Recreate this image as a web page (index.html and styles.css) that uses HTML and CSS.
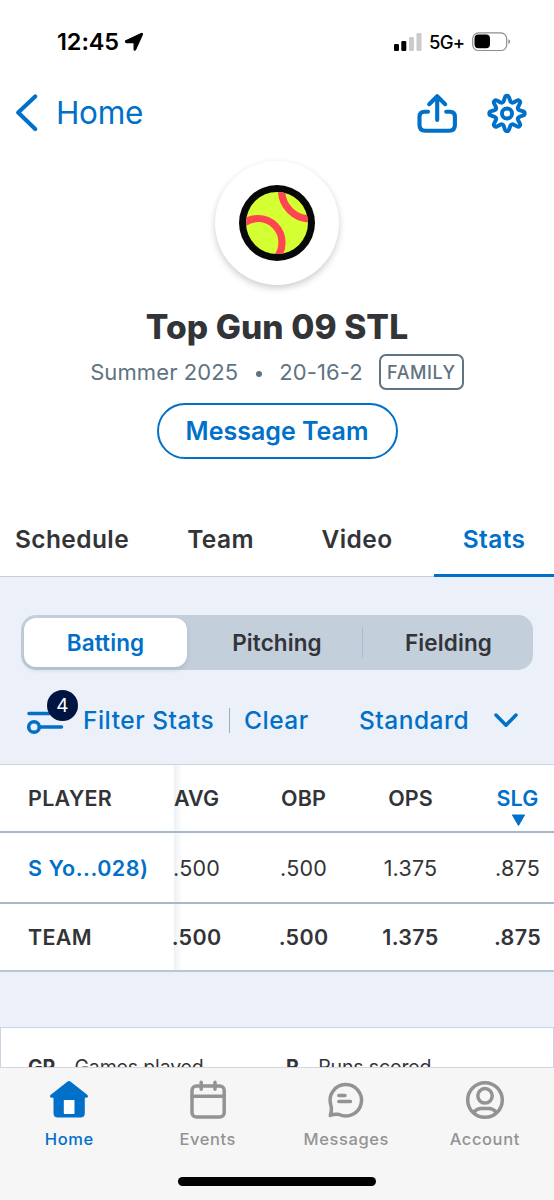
FILE: index.html
```
<!DOCTYPE html>
<html lang="en">
<head>
<meta charset="utf-8">
<title>Top Gun 09 STL</title>
<link rel="stylesheet" href="styles.css">
</head>
<body>
<div class="screen">
  <div class="status">
    <span class="time">12:45</span>
    <svg class="locate" width="20" height="20" viewBox="0 0 20 20"><path stroke="#000" stroke-width="1.200" stroke-linejoin="round" d="M1.800 8.700 17.300 1.500Q18.900 1 18.300 2.700L11.500 17.700Q10.500 19 10.100 17.300V10.700H2.600Q.9 10 1.800 8.700Z"/></svg>
    <svg class="signal" width="28" height="18" viewBox="0 0 28 18"><rect x="0" y="11" width="5" height="7" rx="1.3"/><rect x="7.3" y="8" width="5" height="10" rx="1.3"/><g fill="#cbcbcb"><rect x="15" y="4" width="5" height="14" rx="1.3"/><rect x="22.5" y="0" width="5" height="18" rx="1.3"/></g></svg>
    <span class="network">5G+</span>
    <svg class="battery" width="39" height="20" viewBox="0 0 39 20"><rect x=".7" y=".9" width="34" height="17.6" rx="5.8" fill="none" stroke="#8e8e8e" stroke-width="1.2"/><rect x="2.5" y="2.6" width="15.5" height="13.6" rx="4"/><path d="M36.4 7.2Q38.2 8 38.2 9.5T36.4 12Z" fill="#8e8e8e"/></svg>
  </div>
  <header class="nav">
    <svg class="back" width="24" height="38" viewBox="0 0 24 38"><path d="M20.200 2.500 3.200 18.500l17 16.500"/></svg>
    <a class="nav-home">Home</a>
    <svg class="share" width="40" height="40" viewBox="0 0 40 40"><path d="M20.2 27V3.500M12.200 11.200l8-8 8 8M11 18.700H7.500q-5 0-5 5V32q0 5.700 5.700 5.700h24q5.700 0 5.700-5.700v-8.300q0-5-5-5h-3.700"/></svg>
    <svg class="gear" width="40" height="40" viewBox="-21 -21.500 42 42"><path d="M-2.1-17.070A2.200 2.200 0 0 1 2.100-17.070L3.470-12.940A2.300 2.300 0 0 0 6.700-11.600L10.590-13.550A2.200 2.200 0 0 1 13.550-10.590L11.600-6.700A2.300 2.300 0 0 0 12.940-3.470L17.070-2.100A2.200 2.200 0 0 1 17.070 2.100L12.940 3.470A2.300 2.300 0 0 0 11.600 6.700L13.550 10.590A2.200 2.200 0 0 1 10.590 13.550L6.700 11.600A2.300 2.300 0 0 0 3.470 12.940L2.100 17.070A2.200 2.200 0 0 1-2.100 17.070L-3.470 12.940A2.300 2.300 0 0 0-6.700 11.600L-10.590 13.550A2.200 2.200 0 0 1-13.550 10.590L-11.600 6.700A2.300 2.300 0 0 0-12.940 3.470L-17.070 2.100A2.200 2.200 0 0 1-17.070-2.100L-12.940-3.470A2.300 2.300 0 0 0-11.600-6.700L-13.550-10.590A2.200 2.200 0 0 1-10.590-13.550L-6.700-11.600A2.300 2.300 0 0 0-3.470-12.940Z"/><circle r="5.300"/></svg>
  </header>
  <section class="profile">
    <div class="avatar">
      <svg width="76" height="76" viewBox="0 0 76 76"><defs><clipPath id="ball"><circle cx="38" cy="38" r="31"/></clipPath></defs><circle cx="38" cy="38" r="38" fill="#080808"/><circle cx="38" cy="38" r="31" fill="#d4ff32"/><g clip-path="url(#ball)" fill="none" stroke="#ff4452" stroke-width="7.200"><circle cx="19" cy="57.500" r="24"/><circle cx="71.500" cy="5" r="29"/></g></svg>
    </div>
    <h1 class="title">Top Gun 09 STL</h1>
    <div class="meta"><span class="season">Summer 2025</span><i class="dot"></i><span class="record">20-16-2</span><span class="badge">FAMILY</span></div>
    <button class="message"><span>Message Team</span></button>
  </section>
  <nav class="tabs">
    <a class="tab schedule">Schedule</a><a class="tab team">Team</a><a class="tab video">Video</a><a class="tab stats">Stats</a>
  </nav>
  <main class="content">
    <div class="segments"><span class="segment active">Batting</span><span class="segment pitching">Pitching</span><i class="segment-rule"></i><span class="segment fielding">Fielding</span></div>
    <div class="filters">
      <div class="filter-icon">
        <svg width="38" height="26" viewBox="0 0 38 26"><path d="M2 4.500h29M13 18h21.500"/><circle cx="7" cy="18" r="5.300"/></svg>
        <span class="count">4</span>
      </div>
      <span class="filter-label">Filter Stats</span><i class="rule"></i><span class="clear">Clear</span><span class="standard">Standard</span>
      <svg class="chevron" width="26" height="16" viewBox="0 0 26 16"><path d="M3 3l10 10.200L23 3"/></svg>
    </div>
    <div class="table">
      <div class="row head"><span class="player">PLAYER</span><span class="cell first">AVG</span><span class="cell">OBP</span><span class="cell">OPS</span><span class="cell sorted">SLG<svg class="arrow" width="15" height="13" viewBox="0 0 15 13"><path d="M1.400 1h12.200L7.500 11.500Z" stroke="#0070c9" stroke-linejoin="round"/></svg></span></div>
      <div class="row"><span class="player link">S Yo...028)</span><span class="cell first">.500</span><span class="cell">.500</span><span class="cell">1.375</span><span class="cell">.875</span></div>
      <div class="row total"><span class="player">TEAM</span><span class="cell first">.500</span><span class="cell">.500</span><span class="cell">1.375</span><span class="cell">.875</span></div>
    </div>
    <div class="legend"><span><b>GP</b> - Games played</span><span><b>R</b> - Runs scored</span></div>
  </main>
  <footer class="tabbar">
    <div class="items">
      <a class="item current"><svg width="40" height="40" viewBox="0 0 40 40"><path fill="currentColor" stroke="none" d="M18.300 1.700q1.700-1.400 3.400 0L38.500 15q1.500 2.700-1.500 2.700h-1.200V33q0 4.500-4.500 4.500H9q-4.500 0-4.500-4.500V17.700H3q-3-.2-1.500-2.700Z"/><rect x="14.800" y="20" width="10.700" height="14" rx=".8" fill="#fff" stroke="none"/></svg><span>Home</span></a>
      <a class="item"><svg width="40" height="40" viewBox="0 0 40 40"><rect x="4" y="6" width="32.200" height="31" rx="4.500"/><path d="M4 16.200h32M13.200 2.300v7M27 2.300v7"/></svg><span>Events</span></a>
      <a class="item"><svg width="40" height="40" viewBox="0 0 40 40"><path stroke-linejoin="round" d="M4.300 35.500Q6.300 29 4.700 24.500A15.700 15.700 0 1 1 13.200 34.500Q8.500 33.800 4.300 35.500Z"/><path d="M12.800 15.500h6.200M12.800 21.500h11.700"/></svg><span>Messages</span></a>
      <a class="item"><svg width="40" height="40" viewBox="0 0 40 40"><circle cx="20" cy="20" r="17.300"/><circle cx="20" cy="15.800" r="7.200"/><path d="M8.500 32.500q3.500-4 7.500-4h8q4 0 7.500 4"/></svg><span>Account</span></a>
    </div>
    <i class="indicator"></i>
  </footer>
</div>
</body>
</html>
```
FILE: styles.css
```
* { box-sizing: border-box; }
body { margin: 0; background: #fff; font-family: Inter, sans-serif; color: #333438; }
.screen { width: 554px; height: 1200px; display: flex; flex-direction: column; overflow: hidden; }
svg { display: block; flex: none; }
span, a { white-space: nowrap; }
.status { height: 83px; flex: none; display: flex; align-items: center; padding-left: 57px; color: #000; }
.time { font-size: 23.5px; font-weight: 600; width: 67px; letter-spacing: -.1px; }
.signal { margin-left: 250px; }
.network { font-size: 18.5px; font-weight: 500; margin-left: 7px; width: 43px; letter-spacing: -.8px; }
.nav { height: 60px; flex: none; display: flex; align-items: center; padding-left: 15px; }
.nav svg { fill: none; stroke: #0070c9; stroke-width: 4.1; stroke-linecap: round; stroke-linejoin: round; }
.nav-home { font-size: 31.5px; color: #0070c9; margin-left: 17px; padding-bottom: 2px; width: 361px; letter-spacing: -.3px; }
.gear { margin-left: 30px; }
.profile { height: 358px; flex: none; display: flex; flex-direction: column; align-items: center; padding-top: 18px; }
.avatar { width: 124px; height: 124px; border-radius: 50%; background: #fff; display: grid; place-items: center; box-shadow: 0 3px 7px rgba(0,0,0,.2); }
.title { margin: 22px 0 0; height: 40px; line-height: 40px; font-size: 33.5px; font-weight: 800; letter-spacing: .1px; }
.meta { display: flex; align-items: center; height: 36px; margin-top: 7px; color: #5f7381; font-size: 22px; letter-spacing: .1px; }
.dot { width: 6px; height: 6px; border-radius: 50%; background: #5f7381; margin: 4px 17px 0 18px; }
.badge { width: 85px; height: 36px; border: 2px solid #5f7381; border-radius: 7px; display: grid; place-items: center; margin-left: 16px; font-size: 18px; font-weight: 500; letter-spacing: .6px; }
.message { width: 241px; height: 56px; margin-top: 13px; padding: 0; border: 2px solid #0070c9; border-radius: 28px; background: #fff; color: #0070c9; font: 600 25px Inter, sans-serif; letter-spacing: 0; }
.tabs { height: 76px; flex: none; display: flex; border-bottom: 1px solid #c9ceda; }
.tab { height: 76px; line-height: 76px; text-align: center; font-size: 24.5px; font-weight: 600; letter-spacing: .4px; }
.schedule { width: 144px; }
.team { width: 153px; }
.video { width: 120px; }
.stats { width: 120px; margin-left: auto; color: #0070c9; border-bottom: 3px solid #0070c9; }
.content { height: 490px; flex: none; background: #ebf0f9; padding-top: 38px; }
.segments { width: 512px; height: 55px; margin-left: 21px; border-radius: 15px; background: #c3cfdb; display: flex; align-items: center; font-size: 22.5px; font-weight: 600; letter-spacing: .1px; }
.segment { text-align: center; line-height: 49px; }
.active { width: 163px; height: 49px; margin-left: 3px; background: #fff; color: #0070c9; border-radius: 12px; box-shadow: 0 3px 4px rgba(70,90,115,.16); }
.pitching { width: 175px; padding-left: 5px; }
.segment-rule { width: 1px; height: 31px; background: #afbdca; }
.fielding { width: 170px; padding-left: 1px; }
.filters { height: 94px; display: flex; align-items: center; padding: 6px 0 0 27px; color: #0070c9; font-size: 24.5px; font-weight: 500; letter-spacing: .5px; }
.filter-icon { width: 56px; position: relative; padding-top: 4px; }
.filter-icon svg, .chevron { fill: none; stroke: #0070c9; stroke-width: 3.5; stroke-linecap: round; stroke-linejoin: round; }
.count { position: absolute; left: 20px; top: -15px; width: 31px; height: 31px; border-radius: 50%; background: #001441; color: #fff; font-size: 19px; font-weight: 400; line-height: 31px; text-align: center; letter-spacing: 0; }
.filter-label { width: 146px; }
.rule { width: 1px; height: 25px; background: #9cacbd; }
.clear { margin-left: 14px; width: 115px; }
.standard { width: 134px; }
.table { background: #fff; border-top: 1px solid #cbd4e2; font-size: 21.5px; }
.row { height: 71px; display: grid; grid-template-columns: 174px 76px 107px 107px 107px; border-bottom: 2px solid #a9b8c8; letter-spacing: .2px; line-height: 26px; }
.head { height: 68px; font-weight: 600; letter-spacing: .1px; }
.total { height: 68px; font-weight: 600; letter-spacing: .3px; border-color: #b8c7d8; }
.player { padding-left: 28px; display: flex; align-items: center; font-weight: 600; letter-spacing: .3px; position: relative; z-index: 1; }
.link { color: #0070c9; letter-spacing: .5px; }
.cell { display: flex; justify-content: center; align-items: center; min-width: 0; }
.first { padding-right: 31px; background: linear-gradient(90deg, #edf1f6, #fff 9px); }
.sorted { color: #0070c9; position: relative; }
.arrow { position: absolute; left: 47px; top: 49px; fill: #0070c9; }
.legend { height: 60px; margin-top: 55px; border: 1px solid #cbd4e2; background: #fff; padding: 27px 0 0 27px; display: flex; font-size: 19.5px; line-height: 25px; }
.legend span { width: 258px; letter-spacing: -.15px; }
.tabbar { height: 133px; flex: none; background: #f6f6f7; border-top: 1px solid #d4d7df; position: relative; }
.items { display: flex; padding-top: 12px; }
.item { width: 138.5px; display: flex; flex-direction: column; align-items: center; color: #939393; font-size: 16.5px; font-weight: 500; letter-spacing: .6px; line-height: 20px; }
.item svg { fill: none; stroke: currentColor; stroke-width: 3.5; stroke-linecap: round; margin-bottom: 9px; }
.current { color: #0070c9; }
.indicator { display: block; width: 198px; height: 9px; border-radius: 5px; background: #000; margin: 28px auto 0; }
```
